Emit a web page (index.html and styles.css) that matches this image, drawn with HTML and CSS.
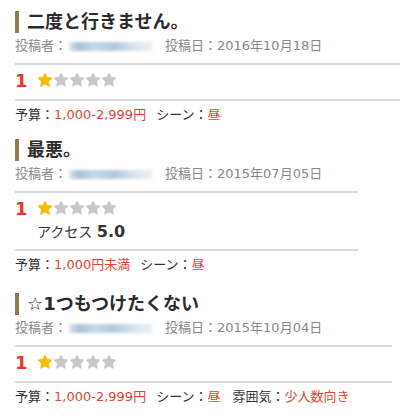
FILE: index.html
```html
<!DOCTYPE html>
<html lang="ja">
<head>
  <meta charset="UTF-8">
  <title>口コミ</title>
<link rel="stylesheet" href="styles.css">
</head>
<body>
  <div class="review">
    <h2 class="title">二度と行きません。</h2>
    <div class="meta">投稿者：<span class="name"></span>投稿日：2016年10月18日</div>
    <div class="rating">
      <div class="score"><b class="num">1</b><span class="stars"></span></div>
    </div>
    <div class="info">予算：<span class="red">1,000-2,999円</span><span class="lbl">シーン：</span><span class="red">昼</span></div>
  </div>

  <div class="review narrow">
    <h2 class="title">最悪。</h2>
    <div class="meta">投稿者：<span class="name"></span>投稿日：2015年07月05日</div>
    <div class="rating">
      <div class="score"><b class="num">1</b><span class="stars"></span></div>
      <div class="access">アクセス <b>5.0</b></div>
    </div>
    <div class="info">予算：<span class="red">1,000円未満</span><span class="lbl">シーン：</span><span class="red">昼</span></div>
  </div>

  <div class="review mid">
    <h2 class="title">☆1つもつけたくない</h2>
    <div class="meta">投稿者：<span class="name"></span>投稿日：2015年10月04日</div>
    <div class="rating">
      <div class="score"><b class="num">1</b><span class="stars"></span></div>
    </div>
    <div class="info">予算：<span class="red">1,000-2,999円</span><span class="lbl">シーン：</span><span class="red">昼</span><span class="lbl wide">雰囲気：</span><span class="red">少人数向き</span></div>
  </div>

<script>
  // 星は1つだけ点灯
  const star = '<svg viewBox="0 0 24 24" width="16" height="16"><polygon stroke-linejoin="round" stroke-width="1.2" points="12,1.5 15.3,8 22.5,9.1 17.3,14.2 18.5,21.4 12,18.1 5.5,21.4 6.7,14.2 1.5,9.1 8.7,8"/></svg>'
  for (let box of document.querySelectorAll(".stars")) {
    let html = ""
    for (let i = 0; i < 5; i++) {
      html += '<span class="star' + (i == 0 ? ' on' : '') + '">' + star + '</span>'
    }
    box.innerHTML = html
  }
</script>
</body>
</html>
```

FILE: styles.css
```css
body {
  margin: 0;
  padding: 11px 0 0 15px;
  background: #fff;
  font-family: "DejaVu Sans", "Noto Sans CJK JP", sans-serif;
  color: #333;
}
.review {
  margin-bottom: 14px;
}
.review.narrow {
  width: 343px;
  margin-bottom: 18px;
}
.review.mid {
  width: 377px;
}
.title {
  margin: 0;
  border-left: 4px solid #8c7b4c;
  padding-left: 8px;
  font-size: 18px;
  line-height: 22px;
  font-weight: bold;
  color: #2b2b2b;
}
.meta {
  margin-top: 3px;
  padding-bottom: 7px;
  border-bottom: 2px solid #dcdcdc;
  font-size: 13px;
  line-height: 20px;
  color: #888;
  display: flex;
  align-items: center;
}
.name {
  display: inline-block;
  width: 83px;
  height: 9px;
  margin: 0 13px 0 2px;
  background: linear-gradient(90deg, #dfe7ef 0%, #a9bfd3 12%, #c7d6e4 30%, #b4c8da 55%, #d7e1ea 75%, #e9eef2 100%);
  filter: blur(1.5px);
}
.rating {
  padding: 5px 0 9px;
  border-bottom: 2px solid #dcdcdc;
}
.score {
  display: flex;
  align-items: center;
  height: 20px;
}
.num {
  font-size: 18px;
  color: #e8392b;
  width: 22px;
}
.stars {
  display: flex;
}
.star svg {
  display: block;
  fill: #c6c6c6;
  stroke: #c6c6c6;
}
.star.on svg {
  fill: #f5bd00;
  stroke: #f5bd00;
}
.access {
  margin-top: 6px;
  padding-left: 22px;
  font-size: 14px;
  line-height: 16px;
  color: #333;
}
.access b {
  font-size: 16px;
}
.info {
  margin-top: 4px;
  font-size: 13px;
  line-height: 20px;
  color: #333;
}
.red {
  color: #e5432e;
}
.lbl {
  margin-left: 10px;
}
.lbl.wide {
  margin-left: 12px;
}
```
